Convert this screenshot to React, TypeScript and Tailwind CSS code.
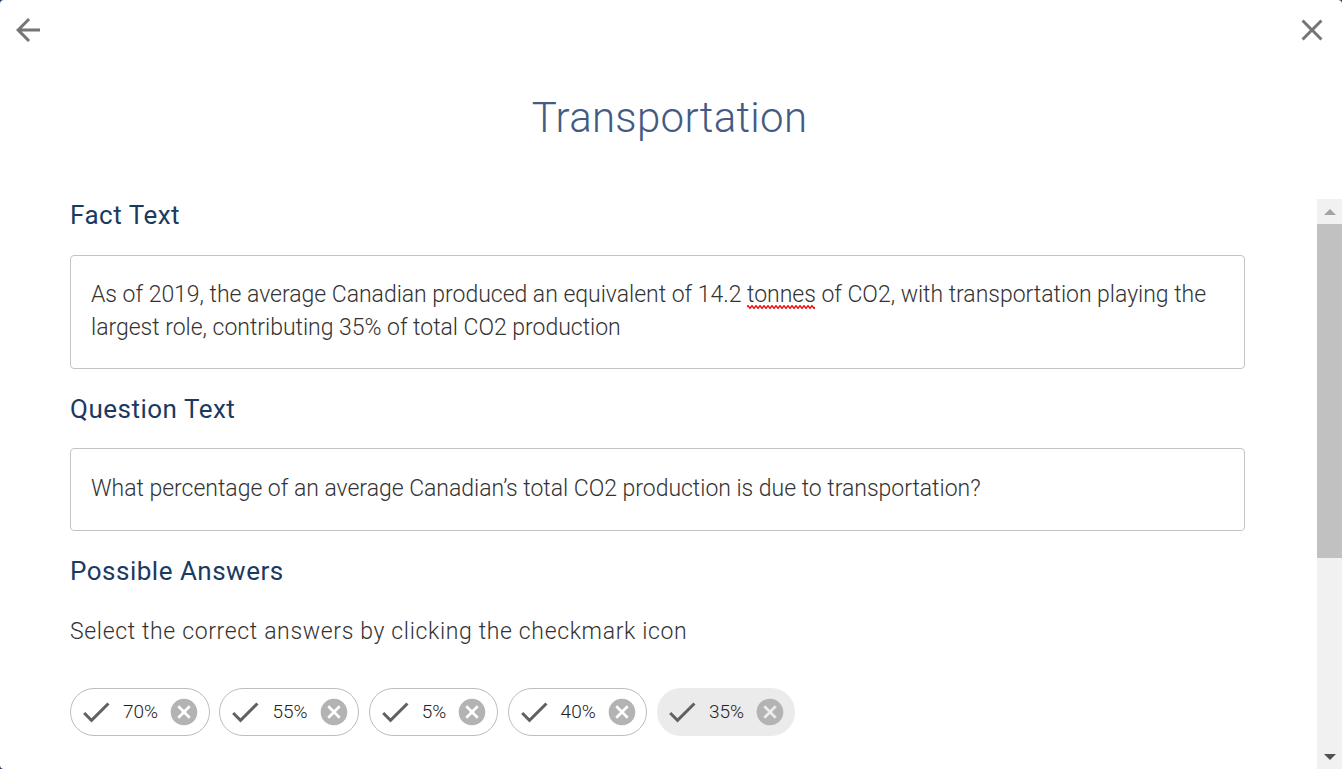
import { useState } from 'react';

const answers = [
  { label: '70%', selected: false },
  { label: '55%', selected: false },
  { label: '5%', selected: false },
  { label: '40%', selected: false },
  { label: '35%', selected: true },
];

function Check() {
  return (
    <svg width="36" height="36" viewBox="0 0 24 24" fill="#616161">
      <path d="M9 16.17 4.83 12l-1.42 1.41L9 19 21 7l-1.41-1.41z" />
    </svg>
  );
}

function Cancel() {
  return (
    <svg width="32" height="32" viewBox="0 0 24 24" fill="#b3b3b3">
      <path d="M12 2C6.47 2 2 6.47 2 12s4.47 10 10 10 10-4.47 10-10S17.53 2 12 2zm5 13.59L15.59 17 12 13.41 8.41 17 7 15.59 10.59 12 7 8.41 8.41 7 12 10.59 15.59 7 17 8.41 13.41 12 17 15.59z" />
    </svg>
  );
}

// red squiggle the browser's spell checker draws under a word
function Squiggle() {
  return (
    <svg className="absolute left-0 top-[24px]" width="68" height="4" viewBox="0 0 68 4" fill="none">
      <path d={'M0 2' + ' q1 -2.4 2 0 q1 2.4 2 0'.repeat(17)} stroke="#f00000" strokeWidth="1.4" />
    </svg>
  );
}

export default function App() {
  const [items] = useState(answers);

  return (
    <div className="h-[769px] w-[1342px] overflow-hidden bg-[#1b3a5f]">
      <div className="h-full rounded-[4px] bg-white font-['Roboto',sans-serif] font-light text-[#333333]">
        <div className="flex h-[60px] items-center justify-between pl-[10px] pr-[12px]">
          <svg width="36" height="36" viewBox="0 0 24 24" fill="#757575">
            <path d="M20 11H7.83l5.59-5.59L12 4l-8 8 8 8 1.41-1.41L7.83 13H20v-2z" />
          </svg>
          <svg width="36" height="36" viewBox="0 0 24 24" fill="#757575">
            <path d="M19 6.41 17.59 5 12 10.59 6.41 5 5 6.41 10.59 12 5 17.59 6.41 19 12 13.41 17.59 19 19 17.59 13.41 12z" />
          </svg>
        </div>

        <h1 className="mt-[33px] h-[50px] pr-[3px] text-center text-[42px] leading-[50px] font-light tracking-[0.3px] text-[#435b83]">
          Transportation
        </h1>

        <div className="mt-[56px] flex h-[570px]">
          <div className="flex-1 pl-[70px] pr-[72px]">
            <h2 className="-mt-px text-[26px] leading-[34px] font-normal tracking-[0.5px] text-[#1b3a5f]">Fact Text</h2>
            <div className="mt-[23px] h-[114px] rounded border border-[#c4c4c4] px-5 py-[22px] text-[23px] leading-[33px] tracking-[-0.02px]">
              As of 2019, the average Canadian produced an equivalent of 14.2{' '}
              <span className="relative">
                tonnes
                <Squiggle />
              </span>{' '}
              of CO2, with transportation playing the largest role, contributing 35% of total CO2 production
            </div>

            <h2 className="mt-[23px] text-[26px] leading-[34px] font-normal tracking-[0.5px] text-[#1b3a5f]">Question Text</h2>
            <div className="mt-[22px] h-[83px] rounded border border-[#c4c4c4] px-5 py-[23px] text-[23px] leading-[33px] tracking-[-0.02px]">
              What percentage of an average Canadian’s total CO2 production is due to transportation?
            </div>

            <h2 className="mt-[23px] text-[26px] leading-[34px] font-normal tracking-[0.5px] text-[#1b3a5f]">Possible Answers</h2>
            <p className="mt-[27px] text-[23px] leading-[34px] tracking-[0.65px]">Select the correct answers by clicking the checkmark icon</p>

            <div className="mt-[39px] flex gap-[9.5px]">
              {items.map(a => (
                <div
                  key={a.label}
                  className={`flex h-12 items-center rounded-3xl pl-[7px] pr-[8.75px] text-[19px] font-light text-[#222222] ${a.selected ? 'bg-[#ebebeb]' : 'border border-[#bdbdbd] bg-white'}`}
                >
                  <Check />
                  <span className="ml-[9px] mr-[10px]">{a.label}</span>
                  <Cancel />
                </div>
              ))}
            </div>
          </div>

          <div className="flex w-[25px] flex-col bg-[#f1f1f1]">
            <div className="flex h-[25px] items-center justify-center">
              <div className="h-0 w-0 border-x-[6px] border-b-[6px] border-x-transparent border-b-[#a3a3a3]" />
            </div>
            <div className="h-[334px] bg-[#c1c1c1]" />
            <div className="flex-1" />
            <div className="flex h-[25px] items-center justify-center">
              <div className="h-0 w-0 border-x-[6px] border-t-[6px] border-x-transparent border-t-[#505050]" />
            </div>
          </div>
        </div>
      </div>
    </div>
  );
}
